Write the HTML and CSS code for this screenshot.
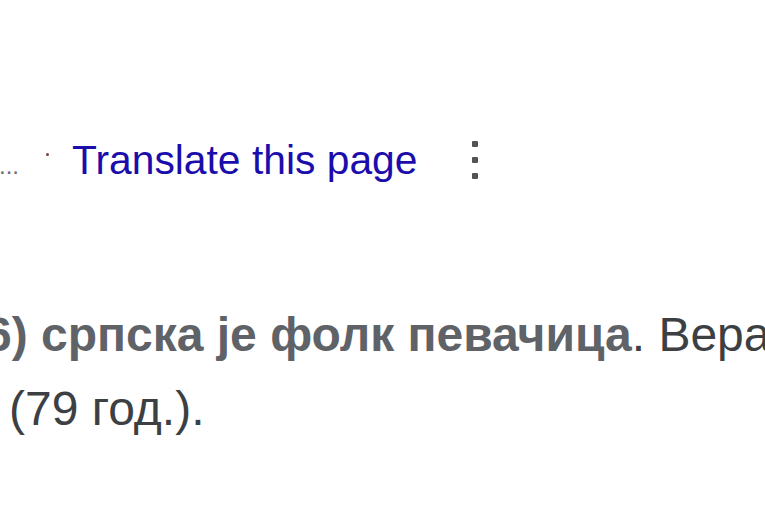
FILE: index.html
```html
<!DOCTYPE html>
<html lang="sr">
<head>
<meta charset="utf-8">
<title>Search result</title>
<link rel="stylesheet" href="styles.css">
</head>
<body>
<div class="cite-row">
  <span class="ellipsis">...</span>
  <span class="arrow"></span>
  <a class="translate" href="#">Translate this page</a>
  <span class="kebab"><i></i><i></i><i></i></span>
</div>
<div class="snippet">
  <div class="line line1"><span class="em">6) српска је фолк певачица</span>. Вера</div>
  <div class="line line2">(79 год.).</div>
</div>
</body>
</html>
```
FILE: styles.css
```css
html, body {
  margin: 0;
  padding: 0;
  background: #ffffff;
  overflow: hidden;
  width: 765px;
  height: 510px;
}
body {
  font-family: "Liberation Sans", Arial, sans-serif;
}
.cite-row {
  display: flex;
  align-items: baseline;
  height: 46px;
  margin-top: 137px;
}
.ellipsis {
  font-size: 24px;
  line-height: 46px;
  color: #6b6f74;
  margin-left: -1px;
}
.arrow {
  align-self: flex-start;
  width: 3px;
  height: 3px;
  border-radius: 50%;
  background: #8a3b3b;
  margin-top: 16px;
  margin-left: 27px;
}
.translate {
  font-size: 40.8px;
  line-height: 46px;
  color: #1a0dab;
  text-decoration: none;
  margin-left: 23px;
  white-space: nowrap;
}
.kebab {
  align-self: flex-start;
  display: flex;
  flex-direction: column;
  gap: 10px;
  margin-top: 4px;
  margin-left: 55px;
}
.kebab i {
  display: block;
  width: 6px;
  height: 6px;
  border-radius: 1px;
  background: #505357;
}
.snippet {
  margin-top: 115px;
}
.line {
  font-size: 48px;
  line-height: 74px;
  height: 74px;
  white-space: nowrap;
  color: #3c4043;
}
.line1 {
  margin-left: -15px;
}
.line2 {
  padding-left: 9px;
}
.em {
  color: #5f6368;
  font-weight: bold;
}
```
